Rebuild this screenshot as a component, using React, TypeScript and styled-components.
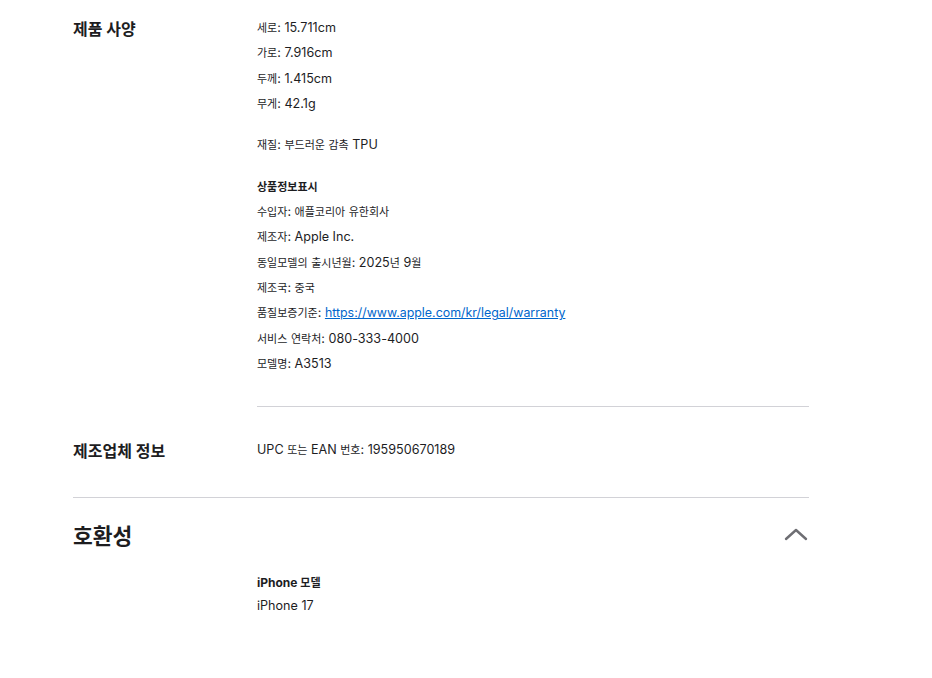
import React from 'react';
import styled, { createGlobalStyle } from 'styled-components';

const GlobalStyle = createGlobalStyle`
   body {
      margin: 0;
      background: #fff;
      font-family: 'Inter', 'Noto Sans CJK KR', sans-serif;
      color: #1d1d1f;
   }
`;

// hangul runs are set a bit smaller than the latin text, as in the original
const ko = (text: string) =>
   text.split(/([가-힣]+)/).map((part, i) => (/[가-힣]/.test(part) ? <Ko key={i}>{part}</Ko> : part));

const App = () => {
   const specGroups: { bold?: string; lines: React.ReactNode[] }[] = [
      { lines: ['세로: 15.711cm', '가로: 7.916cm', '두께: 1.415cm', '무게: 42.1g'].map(ko) },
      { lines: [ko('재질: 부드러운 감촉 TPU')] },
      {
         bold: '상품정보표시',
         lines: [
            ko('수입자: 애플코리아 유한회사'),
            ko('제조자: Apple Inc.'),
            ko('동일모델의 출시년월: 2025년 9월'),
            ko('제조국: 중국'),
            <>
               {ko('품질보증기준: ')}
               <Link href="#">https://www.apple.com/kr/legal/warranty</Link>
            </>,
            ko('서비스 연락처: 080-333-4000'),
            ko('모델명: A3513'),
         ],
      },
   ];
   return (
      <Page>
         <GlobalStyle />
         <Row>
            <Heading>제품 사양</Heading>
            <Body>
               {specGroups.map((g, i) => (
                  <Group key={i}>
                     {g.bold && <Strong>{ko(g.bold)}</Strong>}
                     {g.lines.map((l, j) => (
                        <Line key={j}>{l}</Line>
                     ))}
                  </Group>
               ))}
               <InnerRule />
            </Body>
         </Row>
         <Row $pad="30px 0 31px">
            <Heading>제조업체 정보</Heading>
            <Body>
               <Line>{ko('UPC 또는 EAN 번호: 195950670189')}</Line>
            </Body>
         </Row>
         <Section>
            <SectionHead>
               <BigTitle>호환성</BigTitle>
               <Chevron viewBox="0 0 24 14" aria-hidden>
                  <path d="M2 12 L12 3 L22 12" fill="none" stroke="#6e6e73" strokeWidth="2.4" strokeLinecap="round" strokeLinejoin="round" />
               </Chevron>
            </SectionHead>
            <Row $pad="1px 0 0">
               <div />
               <Body>
                  <Strong $lh={23}>iPhone {ko('모델')}</Strong>
                  <Line $lh={23}>iPhone 17</Line>
               </Body>
            </Row>
         </Section>
      </Page>
   );
};

const Page = styled.div`
   width: 736px;
   margin-left: 73px;
   padding-top: 15px;
`;

const Row = styled.div<{ $pad?: string }>`
   display: grid;
   grid-template-columns: 184px 1fr;
   padding: ${p => p.$pad || '0'};
`;

const Heading = styled.h3`
   margin: 0;
   font-size: 16px;
   font-weight: 700;
   line-height: 29px;
`;

const Body = styled.div`
   font-size: 12.6px;
`;

const Group = styled.div`
   & + & {
      margin-top: 16px;
   }
`;

const Line = styled.div<{ $lh?: number }>`
   height: ${p => p.$lh || 25.35}px;
   line-height: ${p => p.$lh || 25.35}px;
   white-space: nowrap;
`;

const Ko = styled.span`
   font-size: 11px;
   line-height: 1;
`;

const Strong = styled(Line)`
   font-weight: 700;
   font-size: 12px;
`;

const Link = styled.a`
   color: #0066cc;
   font-size: 12.4px;
   text-decoration: underline;
`;

const InnerRule = styled.hr`
   margin: 30px 0 0;
   border: none;
   border-top: 1px solid #d2d2d7;
`;

const Section = styled.div`
   border-top: 1px solid #d2d2d7;
`;

const SectionHead = styled.div`
   display: flex;
   align-items: center;
   justify-content: space-between;
   height: 72px;
`;

const BigTitle = styled.h2`
   margin: 0;
   font-size: 21.5px;
   font-weight: 700;
`;

const Chevron = styled.svg`
   width: 24px;
   height: 14px;
   margin-right: 1px;
`;

export default App;
